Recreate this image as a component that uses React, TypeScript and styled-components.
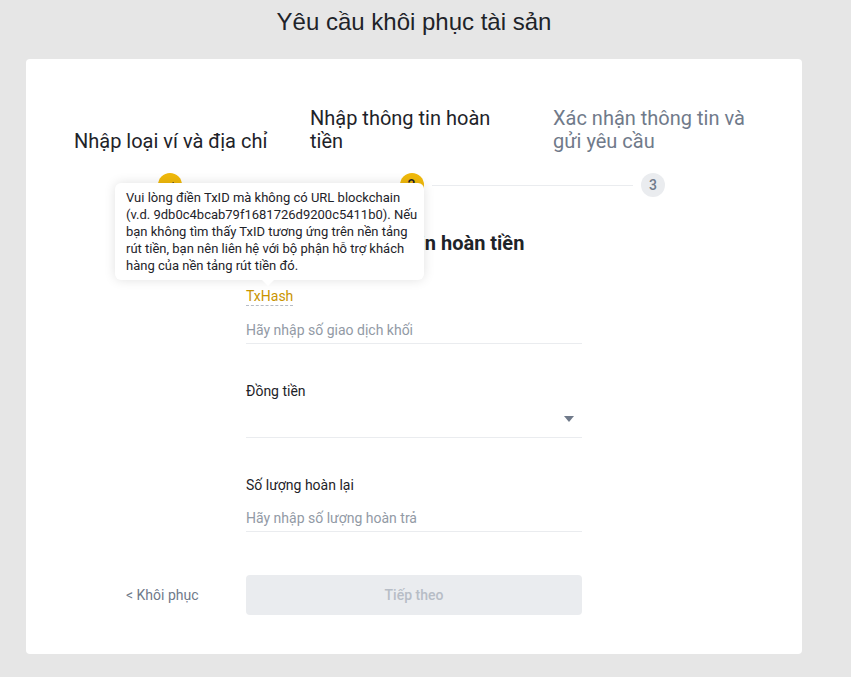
import React from "react";
import styled, { createGlobalStyle } from "styled-components";

const GlobalStyle = createGlobalStyle`
  html, body {
    margin: 0;
    padding: 0;
    background: #e6e6e6;
  }
  body {
    font-family: Roboto, "Noto Sans", sans-serif;
    color: #1e2329;
  }
`;

const Page = styled.div`
  min-height: 677px;
  padding-bottom: 23px;
  box-sizing: border-box;
`;

const Title = styled.h1`
  margin: 0;
  width: 828px;
  padding-top: 7px;
  height: 59px;
  box-sizing: border-box;
  text-align: center;
  font-family: "Liberation Sans", Arial, sans-serif;
  font-weight: 400;
  font-size: 24px;
  line-height: 30px;
  color: #1e2329;
`;

const Card = styled.div`
  margin-left: 26px;
  width: 776px;
  height: 595px;
  background: #fff;
  border-radius: 4px;
  padding-top: 48px;
  box-sizing: border-box;
`;

const StepLabels = styled.div`
  display: grid;
  grid-template-columns: 236px 243px 210px;
  align-items: end;
  padding-left: 48px;
`;

const StepLabel = styled.div<{ $muted?: boolean }>`
  max-width: 205px;
  font-size: 20px;
  line-height: 23px;
  color: ${(p) => (p.$muted ? "#707a8a" : "#1e2329")};
`;

const StepTrack = styled.div`
  display: flex;
  align-items: center;
  width: 507px;
  margin: 20px 0 0 132px;
`;

const Dot = styled.div<{ $active?: boolean }>`
  flex: none;
  width: 24px;
  height: 24px;
  border-radius: 50%;
  display: flex;
  align-items: center;
  justify-content: center;
  font-size: 14px;
  font-weight: 500;
  background: ${(p) => (p.$active ? "#f0b90b" : "#eaecef")};
  color: ${(p) => (p.$active ? "#1e2329" : "#707a8a")};
`;

const Connector = styled.div<{ $active?: boolean }>`
  flex: 1;
  height: 1px;
  margin: 0 8px;
  background: ${(p) => (p.$active ? "#f0b90b" : "#eaecef")};
`;

const Form = styled.div`
  width: 336px;
  margin-left: 220px;
`;

const FormTitle = styled.h2`
  margin: 34px 0 0;
  text-align: center;
  font-size: 20px;
  line-height: 24px;
  font-weight: 700;
  color: #1e2329;
`;

const Field = styled.div<{ $gap: number }>`
  margin-top: ${(p) => p.$gap}px;
`;

const LabelRow = styled.div`
  position: relative;
  display: inline-block;
`;

const Label = styled.div<{ $hint?: boolean }>`
  font-size: 14px;
  line-height: 18px;
  color: ${(p) => (p.$hint ? "#c99400" : "#1e2329")};
  border-bottom: ${(p) => (p.$hint ? "1px dashed #b7bdc6" : "none")};
`;

const InputLine = styled.div`
  display: flex;
  align-items: flex-end;
  justify-content: space-between;
  height: 34px;
  margin-top: 4px;
  padding-bottom: 4px;
  box-sizing: border-box;
  border-bottom: 1px solid #eaecef;
  font-size: 14px;
  line-height: 18px;
  color: #929aa5;
`;

const Caret = styled.span`
  align-self: center;
  width: 0;
  height: 0;
  margin: 0 8px 0 0;
  border-left: 5px solid transparent;
  border-right: 5px solid transparent;
  border-top: 6px solid #707a8a;
`;

const Tooltip = styled.div`
  position: absolute;
  left: -131px;
  bottom: calc(100% + 7px);
  width: 309px;
  box-sizing: border-box;
  padding: 6px 11px;
  background: #fff;
  border-radius: 6px;
  box-shadow: 0 0 12px rgba(0, 0, 0, 0.12);
  font-size: 13px;
  line-height: 17px;
  color: #1e2329;
  white-space: nowrap;
  z-index: 2;

  &::after {
    content: "";
    position: absolute;
    left: 147px;
    bottom: -6px;
    width: 0;
    height: 0;
    border-left: 6px solid transparent;
    border-right: 6px solid transparent;
    border-top: 6px solid #fff;
  }
`;

const Footer = styled.div`
  display: flex;
  align-items: center;
  margin: 43px 0 0 100px;
`;

const Back = styled.a`
  width: 120px;
  font-size: 14px;
  color: #707a8a;
  cursor: pointer;
`;

const NextButton = styled.button`
  width: 336px;
  height: 40px;
  border: none;
  border-radius: 4px;
  background: #eaecef;
  color: #b7bdc6;
  font-family: inherit;
  font-size: 14px;
  font-weight: 500;
`;

const Check = () => (
  <svg width="12" height="12" viewBox="0 0 12 12" fill="none">
    <path d="M2.5 6.2l2.4 2.4 4.8-5" stroke="#1e2329" strokeWidth="1.6" />
  </svg>
);

const tipLines = [
  "Vui lòng điền TxID mà không có URL blockchain",
  "(v.d. 9db0c4bcab79f1681726d9200c5411b0). Nếu",
  "bạn không tìm thấy TxID tương ứng trên nền tảng",
  "rút tiền, bạn nên liên hệ với bộ phận hỗ trợ khách",
  "hàng của nền tảng rút tiền đó.",
];

const App = () => {
  return (
    <Page>
      <GlobalStyle />
      <Title>Yêu cầu khôi phục tài sản</Title>
      <Card>
        <StepLabels>
          <StepLabel>Nhập loại ví và địa chỉ</StepLabel>
          <StepLabel>Nhập thông tin hoàn tiền</StepLabel>
          <StepLabel $muted>Xác nhận thông tin và gửi yêu cầu</StepLabel>
        </StepLabels>
        <StepTrack>
          <Dot $active>
            <Check />
          </Dot>
          <Connector $active />
          <Dot $active>2</Dot>
          <Connector />
          <Dot>3</Dot>
        </StepTrack>

        <Form>
          <FormTitle>Nhập thông tin hoàn tiền</FormTitle>
          <Field $gap={31}>
            <LabelRow>
              <Label $hint>TxHash</Label>
              <Tooltip>
                {tipLines.map((l) => (
                  <div key={l}>{l}</div>
                ))}
              </Tooltip>
            </LabelRow>
            <InputLine>Hãy nhập số giao dịch khối</InputLine>
          </Field>
          <Field $gap={38}>
            <Label>Đồng tiền</Label>
            <InputLine>
              <span />
              <Caret />
            </InputLine>
          </Field>
          <Field $gap={38}>
            <Label>Số lượng hoàn lại</Label>
            <InputLine>Hãy nhập số lượng hoàn trả</InputLine>
          </Field>
        </Form>

        <Footer>
          <Back>&lt; Khôi phục</Back>
          <NextButton disabled>Tiếp theo</NextButton>
        </Footer>
      </Card>
    </Page>
  );
};

export default App;
